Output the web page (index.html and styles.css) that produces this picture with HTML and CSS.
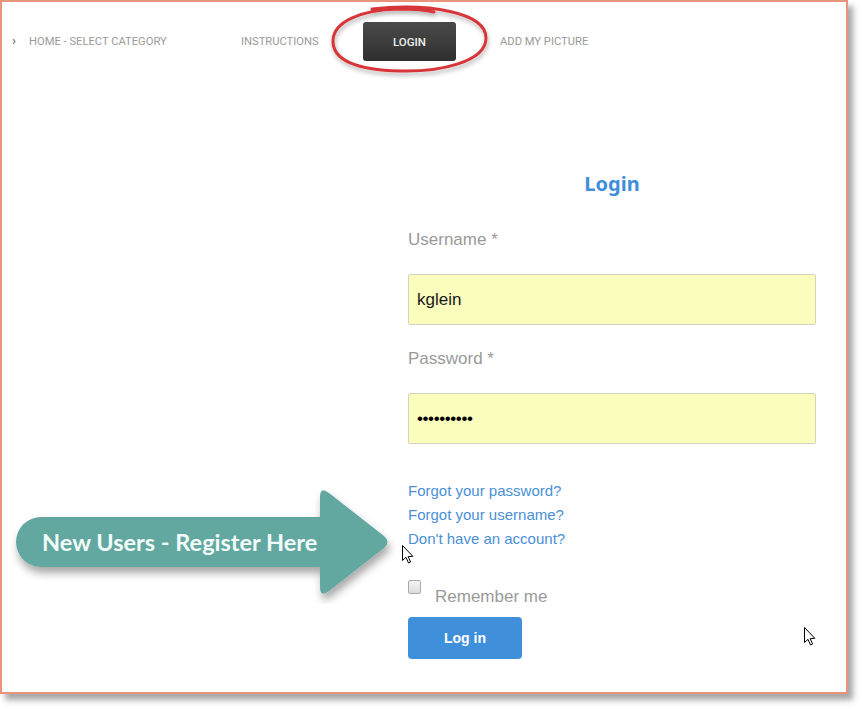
FILE: index.html
```html
<!DOCTYPE html>
<html>
<head>
<meta charset="utf-8">
<link rel="stylesheet" href="styles.css">
</head>
<body>
<div class="frame">
  <nav class="nav">
    <div class="nav-item first"><span class="chev">&#8250;</span>HOME - SELECT CATEGORY</div>
    <div class="nav-item">INSTRUCTIONS</div>
    <div class="nav-item"><span class="nav-btn">LOGIN</span></div>
    <div class="nav-item">ADD MY PICTURE</div>
  </nav>

  <main class="main">
    <form class="login-form">
      <h1 class="title">Login</h1>
      <label class="label">Username *</label>
      <div class="input">kglein</div>
      <label class="label pw">Password *</label>
      <div class="input dots">&#8226;&#8226;&#8226;&#8226;&#8226;&#8226;&#8226;&#8226;&#8226;&#8226;</div>
      <ul class="links">
        <li><a>Forgot your password?</a></li>
        <li><a>Forgot your username?</a></li>
        <li><a>Don't have an account?</a></li>
      </ul>
      <div class="remember">
        <span class="check"></span>
        <span class="remember-text">Remember me</span>
      </div>
      <div class="btn">Log in</div>
    </form>
  </main>

  <svg class="circle" viewBox="326 0 170 80" width="170" height="80">
    <defs>
      <filter id="sh" x="-20%" y="-20%" width="140%" height="160%">
        <feDropShadow dx="1" dy="3" stdDeviation="2" flood-color="#000" flood-opacity="0.3"/>
      </filter>
    </defs>
    <path filter="url(#sh)" d="M 372 9 C 428 3 486 12 486 38 C 486 62 440 72 400 71 C 356 70 332 60 333 40 C 334 22 360 10 398 9 C 414 9 426 10 434 12" fill="none" stroke="#d8363a" stroke-width="3" stroke-linecap="round"/>
  </svg>

  <div class="arrow">
    <svg class="arrow-shape" viewBox="10 484 390 120" width="390" height="120">
      <defs>
        <filter id="ash" x="-10%" y="-20%" width="120%" height="150%">
          <feDropShadow dx="2" dy="6" stdDeviation="4" flood-color="#000" flood-opacity="0.35"/>
        </filter>
      </defs>
      <path filter="url(#ash)" fill="#62a8a0" d="M 41 517 L 320 517 L 320 497 Q 320 486 329 493 L 384 536 Q 391 542 384 548 L 329 591 Q 320 598 320 587 L 320 567 L 41 567 A 25 25 0 0 1 41 517 Z"/>
    </svg>
    <span class="arrow-text">New Users - Register Here</span>
  </div>

  <svg class="cursor c1" viewBox="0 0 12 19" width="12" height="19"><path d="M0.5 0.5 L0.5 15.5 L4 12.3 L6.5 18 L8.6 17.1 L6.2 11.6 L10.8 11.3 Z" fill="#fff" stroke="#000" stroke-width="1"/></svg>
  <svg class="cursor c2" viewBox="0 0 12 19" width="12" height="19"><path d="M0.5 0.5 L0.5 15.5 L4 12.3 L6.5 18 L8.6 17.1 L6.2 11.6 L10.8 11.3 Z" fill="#fff" stroke="#000" stroke-width="1"/></svg>
</div>
</body>
</html>
```

FILE: styles.css
```css
* { box-sizing: border-box; }
html, body { margin: 0; padding: 0; background: #fff; }
body { width: 863px; height: 709px; overflow: hidden; font-family: "Liberation Sans", Arial, sans-serif; }

.frame {
  position: relative;
  width: 848px;
  height: 694px;
  border: 2px solid #e9937d;
  background: #fff;
  box-shadow: 5px 6px 6px rgba(0,0,0,0.35);
}

.nav {
  display: grid;
  grid-template-columns: 229px 122px 137px auto;
  align-items: center;
  height: 39px;
  margin-top: 20px;
  padding-left: 10px;
  font-family: Roboto, sans-serif;
  font-size: 11.2px;
  color: #9a9a9a;
}
.nav-item { white-space: nowrap; line-height: 14px; }
.chev { display: inline-block; width: 17px; font-weight: bold; color: #777; font-size: 13px; }
.nav-btn {
  display: inline-flex;
  align-items: center;
  justify-content: center;
  width: 93px;
  height: 39px;
  border-radius: 3px;
  background: linear-gradient(#4a4a4a, #2f2f2f);
  color: #eeeeee;
  font-weight: 500;
  font-size: 11.5px;
}

.main { padding-left: 406px; }
.login-form { width: 408px; margin: 0; }
.title {
  margin: 111px 0 0;
  text-align: center;
  font-family: "Noto Sans", sans-serif;
  font-weight: bold;
  font-size: 20px;
  line-height: 24px;
  color: #3f8edb;
}
.label {
  display: block;
  margin-top: 34px;
  font-size: 17px;
  line-height: 20px;
  color: #9a9a9a;
}
.label.pw { margin-top: 24px; }
.input {
  margin-top: 24px;
  height: 51px;
  border: 1px solid #d3d3bf;
  border-radius: 2px;
  background: #fbfdbd;
  padding: 0 8px;
  display: flex;
  align-items: center;
  font-size: 17px;
  color: #1a1a1a;
}
.input.dots { font-size: 17px; letter-spacing: -0.4px; color: #000; }
.links { list-style: none; margin: 35px 0 0; padding: 0; }
.links li { font-size: 15px; line-height: 24px; }
.links a { color: #4a8fd6; }
.remember { display: flex; align-items: flex-start; margin-top: 29px; }
.check {
  width: 13px; height: 14px;
  border: 1px solid #aaa;
  border-radius: 2px;
  background: linear-gradient(#f4f4f4, #dcdcdc);
}
.remember-text { margin-left: 14px; padding-top: 7px; font-size: 17px; line-height: 20px; color: #9a9a9a; }
.btn {
  margin-top: 10px;
  width: 114px;
  height: 42px;
  border-radius: 4px;
  background: #3f8fdb;
  color: #fff;
  font-weight: bold;
  font-size: 14px;
  display: flex; align-items: center; justify-content: center;
}

.circle { position: absolute; left: 324px; top: -2px; }
.arrow { position: absolute; left: 8px; top: 482px; width: 390px; height: 120px; }
.arrow-shape { position: absolute; left: 0; top: 0; }
.arrow-text {
  position: absolute;
  left: 32px;
  top: 44px;
  font-family: Lato, sans-serif;
  font-weight: bold;
  font-size: 23.5px;
  line-height: 28px;
  color: #f1fbf7;
  white-space: nowrap;
}
.cursor { position: absolute; }
.c1 { left: 400px; top: 543px; }
.c2 { left: 802px; top: 625px; }
```
